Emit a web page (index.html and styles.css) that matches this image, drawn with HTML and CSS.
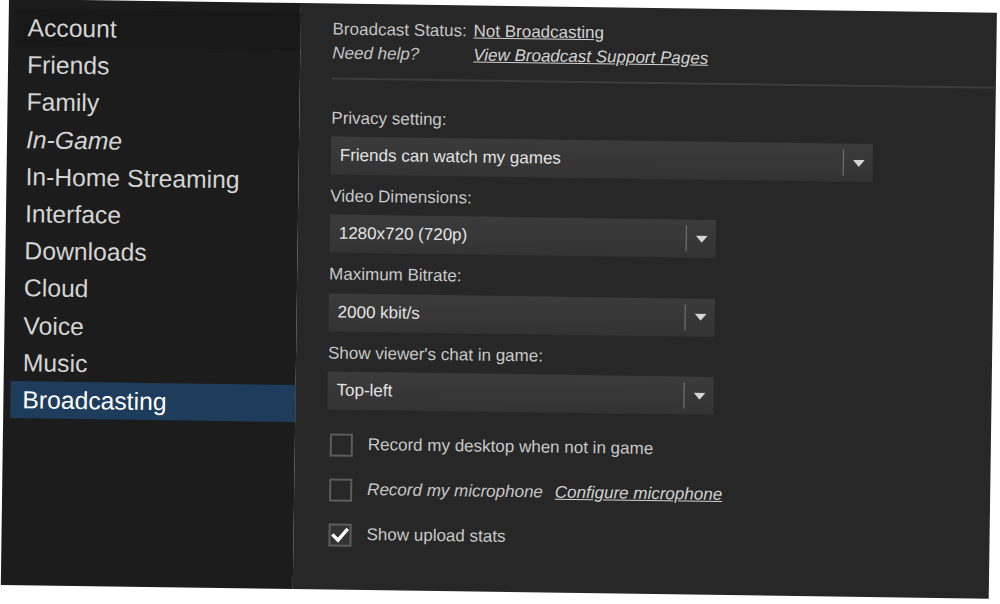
FILE: index.html
```html
<!DOCTYPE html>
<html>
<head>
<meta charset="utf-8">
<title>Settings - Broadcasting</title>
<link rel="stylesheet" href="styles.css">
</head>
<body>
<div class="app">
  <nav class="sidebar">
    <div class="nav-item hover">Account</div>
    <div class="nav-item">Friends</div>
    <div class="nav-item">Family</div>
    <div class="nav-item italic">In-Game</div>
    <div class="nav-item">In-Home Streaming</div>
    <div class="nav-item">Interface</div>
    <div class="nav-item">Downloads</div>
    <div class="nav-item">Cloud</div>
    <div class="nav-item">Voice</div>
    <div class="nav-item">Music</div>
    <div class="nav-item active">Broadcasting</div>
  </nav>
  <main class="content">
    <div class="status">
      <span class="status-label">Broadcast Status:</span>
      <span class="link">Not Broadcasting</span>
      <span class="status-label italic">Need help?</span>
      <span class="link italic">View Broadcast Support Pages</span>
    </div>
    <div class="separator"></div>
    <div class="fields">
      <div class="field">
        <div class="field-label">Privacy setting:</div>
        <div class="dropdown wide">
          <span class="dd-value">Friends can watch my games</span>
          <span class="dd-divider"></span>
          <span class="dd-button"><svg width="12" height="7" viewBox="0 0 12 7"><polygon points="0,0 12,0 6,7" fill="#d6d6d6"/></svg></span>
        </div>
      </div>
      <div class="field">
        <div class="field-label">Video Dimensions:</div>
        <div class="dropdown">
          <span class="dd-value">1280x720 (720p)</span>
          <span class="dd-divider"></span>
          <span class="dd-button"><svg width="12" height="7" viewBox="0 0 12 7"><polygon points="0,0 12,0 6,7" fill="#d6d6d6"/></svg></span>
        </div>
      </div>
      <div class="field">
        <div class="field-label">Maximum Bitrate:</div>
        <div class="dropdown">
          <span class="dd-value">2000 kbit/s</span>
          <span class="dd-divider"></span>
          <span class="dd-button"><svg width="12" height="7" viewBox="0 0 12 7"><polygon points="0,0 12,0 6,7" fill="#d6d6d6"/></svg></span>
        </div>
      </div>
      <div class="field">
        <div class="field-label">Show viewer's chat in game:</div>
        <div class="dropdown">
          <span class="dd-value">Top-left</span>
          <span class="dd-divider"></span>
          <span class="dd-button"><svg width="12" height="7" viewBox="0 0 12 7"><polygon points="0,0 12,0 6,7" fill="#d6d6d6"/></svg></span>
        </div>
      </div>
    </div>
    <div class="checks">
      <div class="check">
        <span class="box"></span>
        <span class="check-label">Record my desktop when not in game</span>
      </div>
      <div class="check">
        <span class="box"></span>
        <span class="check-label italic">Record my microphone</span>
        <span class="link italic config">Configure microphone</span>
      </div>
      <div class="check">
        <span class="box checked"><svg width="19" height="19" viewBox="0 0 19 19"><path d="M3 10 L7.5 14.5 L16 4.5" fill="none" stroke="#ffffff" stroke-width="3.4" stroke-linecap="square"/></svg></span>
        <span class="check-label">Show upload stats</span>
      </div>
    </div>
  </main>
</div>
</body>
</html>
```

FILE: styles.css
```css
html, body {
  margin: 0;
  padding: 0;
  width: 1000px;
  height: 604px;
  overflow: hidden;
  background: #ffffff;
}

.app {
  width: 988px;
  height: 586px;
  display: flex;
  transform-origin: 0 0;
  transform: translate(9px, -1px) rotate(0.8deg);
  font-family: "Liberation Sans", Arial, sans-serif;
}

.italic {
  font-style: italic;
}

/* Sidebar */
.sidebar {
  width: 292px;
  flex: none;
  box-sizing: border-box;
  padding-top: 10px;
  background: #1c1c1c;
}

.nav-item {
  height: 37.2px;
  line-height: 37.2px;
  margin-left: 7px;
  padding-left: 12px;
  font-size: 24.7px;
  color: #d4d4d4;
  white-space: nowrap;
}

.nav-item.hover {
  background: #181818;
}

.nav-item.active {
  background: #1e3c5c;
  color: #ffffff;
}

/* Content */
.content {
  flex: 1;
  box-sizing: border-box;
  padding: 13.5px 0 0 32px;
  background: #272727;
  font-size: 17px;
  color: #c6c6c6;
}

.status {
  display: grid;
  grid-template-columns: 141px auto;
  line-height: 24px;
  white-space: nowrap;
}

.status-label {
  color: #c4c4c4;
}

.link {
  color: #d2d2d2;
  text-decoration: underline;
}

.separator {
  height: 2px;
  margin-top: 12px;
  background: #3c3c3c;
}

.fields {
  margin-top: 29.2px;
}

.field + .field {
  margin-top: 11.8px;
}

.field-label {
  line-height: 20px;
  color: #c8c8c8;
}

.dropdown {
  margin-top: 8.5px;
  width: 386px;
  height: 38px;
  box-sizing: border-box;
  padding-left: 9px;
  display: flex;
  align-items: center;
  background: linear-gradient(#3b3b3b, #333333);
}

.dropdown.wide {
  width: 542px;
}

.dd-value {
  flex: 1;
  color: #e2e2e2;
  white-space: nowrap;
}

.dd-divider {
  width: 1px;
  height: 26px;
  background: #7c7c7c;
}

.dd-button {
  width: 29px;
  display: flex;
  justify-content: center;
  align-items: center;
}

/* Checkboxes */
.checks {
  margin-top: 23.8px;
  display: flex;
  flex-direction: column;
  gap: 22px;
}

.check {
  height: 23px;
  display: flex;
  align-items: center;
  white-space: nowrap;
  color: #c8c8c8;
}

.box {
  width: 23px;
  height: 23px;
  box-sizing: border-box;
  margin-left: 3px;
  margin-right: 15px;
  border: 2px solid #5c5c5c;
  display: flex;
  align-items: center;
  justify-content: center;
}

.box.checked {
  background: #333333;
}

.config {
  margin-left: 12px;
}
```
